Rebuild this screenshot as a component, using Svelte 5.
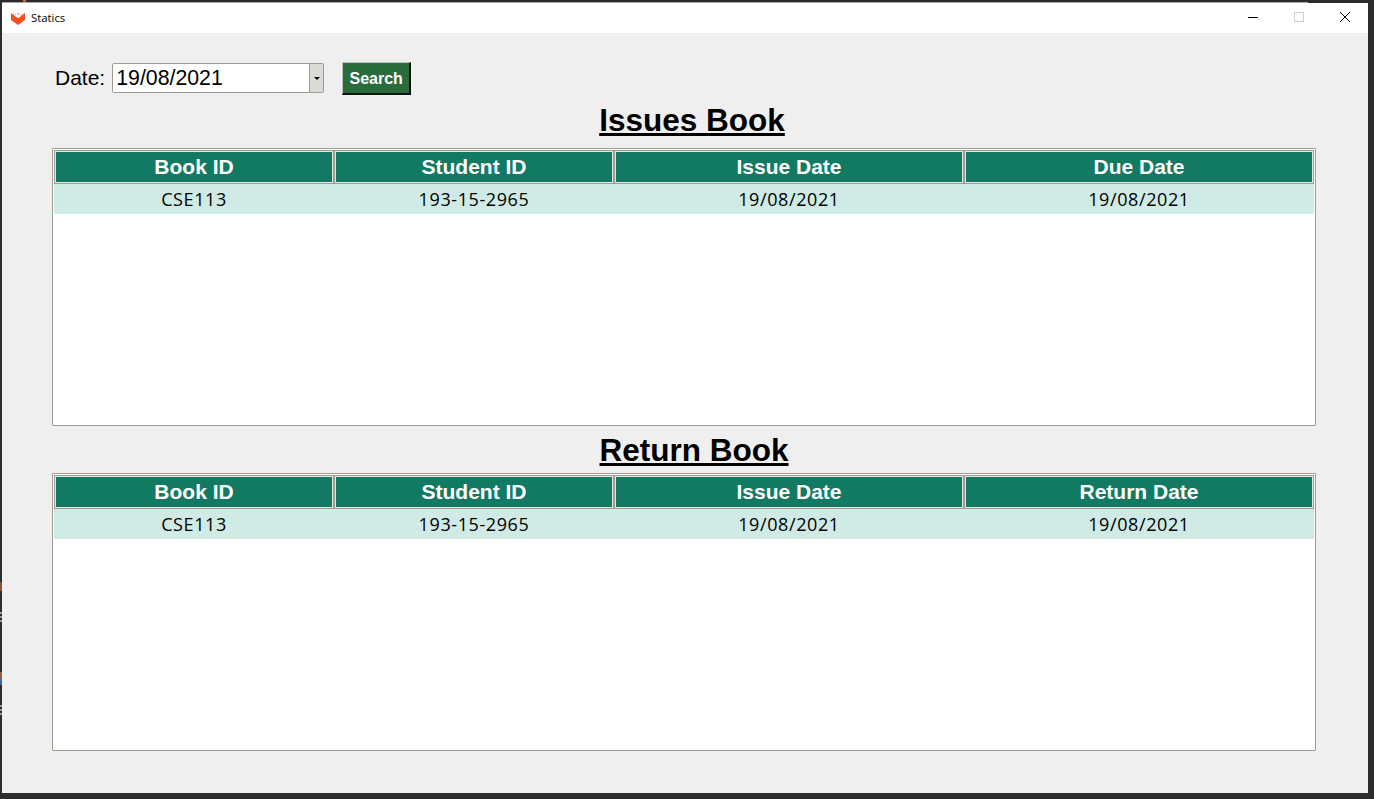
<script>
	const tables = [
		{ title: 'Issues Book', lastCol: 'Due Date', shift: false },
		{ title: 'Return Book', lastCol: 'Return Date', shift: true }
	];
	const row = ['CSE113', '193-15-2965', '19/08/2021', '19/08/2021'];
</script>

<div class="desktop">
	<!-- bits of whatever sits behind the window -->
	<span class="peek red"></span>
	<span class="peek brown"></span>
	<span class="peek dots d1"></span>
	<span class="peek blue"></span>
	<span class="peek dots d2"></span>

	<div class="edge"></div>
	<div class="window">
		<div class="titlebar">
			<svg class="logo" width="16" height="16" viewBox="0 0 16 16">
				<path d="M1 3 L4 5 L6 7 L8 8 L10 7 L12 5 L15 3 L15 10 L8 15 L1 10 Z" fill="#f4511e" />
				<rect x="7" y="3" width="2" height="2" fill="#f4a58a" />
				<rect x="5" y="4" width="1" height="1" fill="#f4a58a" />
				<rect x="10" y="4" width="1" height="1" fill="#f4a58a" />
			</svg>
			<span class="appname">Statics</span>
			<div class="controls">
				<svg width="46" height="30" viewBox="0 0 46 30"><path d="M18 14.5 H28" stroke="#000" fill="none" /></svg>
				<svg width="46" height="30" viewBox="0 0 46 30"><rect x="18.5" y="9.5" width="9" height="9" stroke="#ccc" fill="none" /></svg>
				<svg width="46" height="30" viewBox="0 0 46 30"><path d="M18 9 L28 19 M28 9 L18 19" stroke="#000" fill="none" /></svg>
			</div>
		</div>

		<div class="content">
			<div class="toolbar">
				<label class="datelabel" for="date">Date:</label>
				<div class="datebox">
					<input id="date" value="19/08/2021" />
					<div class="arrow"><span></span></div>
				</div>
				<button class="search">Search</button>
			</div>

			{#each tables as t}
				<h1 class:shift={t.shift}>{t.title}</h1>
				<div class="tree">
					<div class="head">
						<div class="th">Book ID</div>
						<div class="th">Student ID</div>
						<div class="th">Issue Date</div>
						<div class="th">{t.lastCol}</div>
					</div>
					<div class="tr">
						{#each row as cell}
							<div class="td">{cell}</div>
						{/each}
					</div>
				</div>
			{/each}
		</div>
	</div>
</div>

<style>
	:global(body) {
		background: #2b2b2b;
	}

	.desktop {
		position: relative;
		width: 1374px;
		height: 799px;
		padding: 2px 6px 6px 2px;
		box-sizing: border-box;
		background: #2b2d2d;
		overflow: hidden;
	}

	.peek {
		position: absolute;
		left: 0;
		width: 2px;
	}

	.peek.red {
		left: 23px;
		top: 0;
		width: 3px;
		height: 2px;
		background: #e8562a;
	}

	.peek.brown {
		top: 582px;
		height: 9px;
		background: #8a5230;
	}

	.peek.blue {
		top: 672px;
		height: 13px;
		background: linear-gradient(#a5582c 50%, #3a6aa0 50%);
	}

	.peek.dots {
		height: 10px;
		background: repeating-linear-gradient(#9a9a9a 0 2px, #2b2d2d 2px 4px);
	}

	.peek.d1 {
		top: 612px;
	}

	.peek.d2 {
		top: 705px;
	}

	.edge {
		width: 1306px;
		height: 1px;
		background: #a8a8a8;
	}

	.window {
		height: 790px;
		display: flex;
		flex-direction: column;
		background: #efefef;
	}

	.titlebar {
		height: 30px;
		flex: none;
		display: flex;
		align-items: center;
		background: #fff;
	}

	.logo {
		margin-left: 8px;
	}

	.appname {
		margin-left: 5px;
		font: 11.3px/30px 'Open Sans', sans-serif;
		color: #000;
	}

	.controls {
		margin-left: auto;
		display: flex;
		height: 30px;
	}

	.content {
		padding: 29px 52px 0 50px;
	}

	.toolbar {
		display: flex;
		align-items: flex-start;
		height: 34px;
		padding-left: 3px;
	}

	.datelabel {
		font: 21px/32px 'Liberation Sans', Arial, sans-serif;
		color: #000;
		margin-right: 7px;
	}

	.datebox {
		display: flex;
		width: 212px;
		height: 30px;
		margin-top: 1px;
		box-sizing: border-box;
		border: 1px solid #9f9b90;
		border-radius: 2px;
		background: #fff;
	}

	.datebox input {
		flex: 1;
		min-width: 0;
		border: 0;
		padding: 0 0 0 3px;
		outline: none;
		background: transparent;
		font: 21.3px 'Liberation Sans', Arial, sans-serif;
		color: #000;
	}

	.arrow {
		width: 13px;
		background: #dcdad5;
		border-left: 1px solid #9f9b90;
		display: flex;
		align-items: center;
		justify-content: center;
	}

	.arrow span {
		width: 0;
		height: 0;
		border-left: 3.5px solid transparent;
		border-right: 3.5px solid transparent;
		border-top: 3.5px solid #000;
	}

	.search {
		margin-left: 18px;
		width: 69px;
		height: 33px;
		box-sizing: border-box;
		padding: 1px 0 0;
		background: #2a6b3c;
		color: #fff;
		font: bold 16px 'Liberation Sans', Arial, sans-serif;
		border-style: solid;
		border-color: #b9c4bc #111 #111 #b9c4bc;
		border-width: 1px 2px 2px 1px;
	}

	h1 {
		margin: 5px 0 9px;
		height: 38px;
		padding-left: 16px;
		text-align: center;
		font: bold 31.5px/38px 'Liberation Sans', Arial, sans-serif;
		text-decoration: underline;
		color: #000;
	}

	h1.shift {
		padding-left: 20px;
		margin-top: 5px;
		margin-bottom: 4px;
	}

	.tree {
		height: 278px;
		box-sizing: border-box;
		border: 1px solid #9f9b90;
		border-radius: 1px;
		background: #fff;
		padding: 1px 1px 0;
	}

	.head {
		display: grid;
		grid-template-columns: 280px 280px 350px 350px;
		height: 34px;
	}

	.th {
		box-sizing: border-box;
		border: 1px solid #9f9b90;
		box-shadow: inset 0 0 0 1px #e8e6e0;
		background: #127a63;
		color: #fff;
		text-align: center;
		font: bold 21px/32px 'Liberation Sans', Arial, sans-serif;
	}

	.tr {
		display: grid;
		grid-template-columns: 280px 280px 350px 350px;
		height: 30px;
		background: #d0ebe6;
	}

	.td {
		text-align: center;
		font: 18px/30px 'Open Sans', sans-serif;
		letter-spacing: 0.6px;
		color: #000;
	}
</style>
